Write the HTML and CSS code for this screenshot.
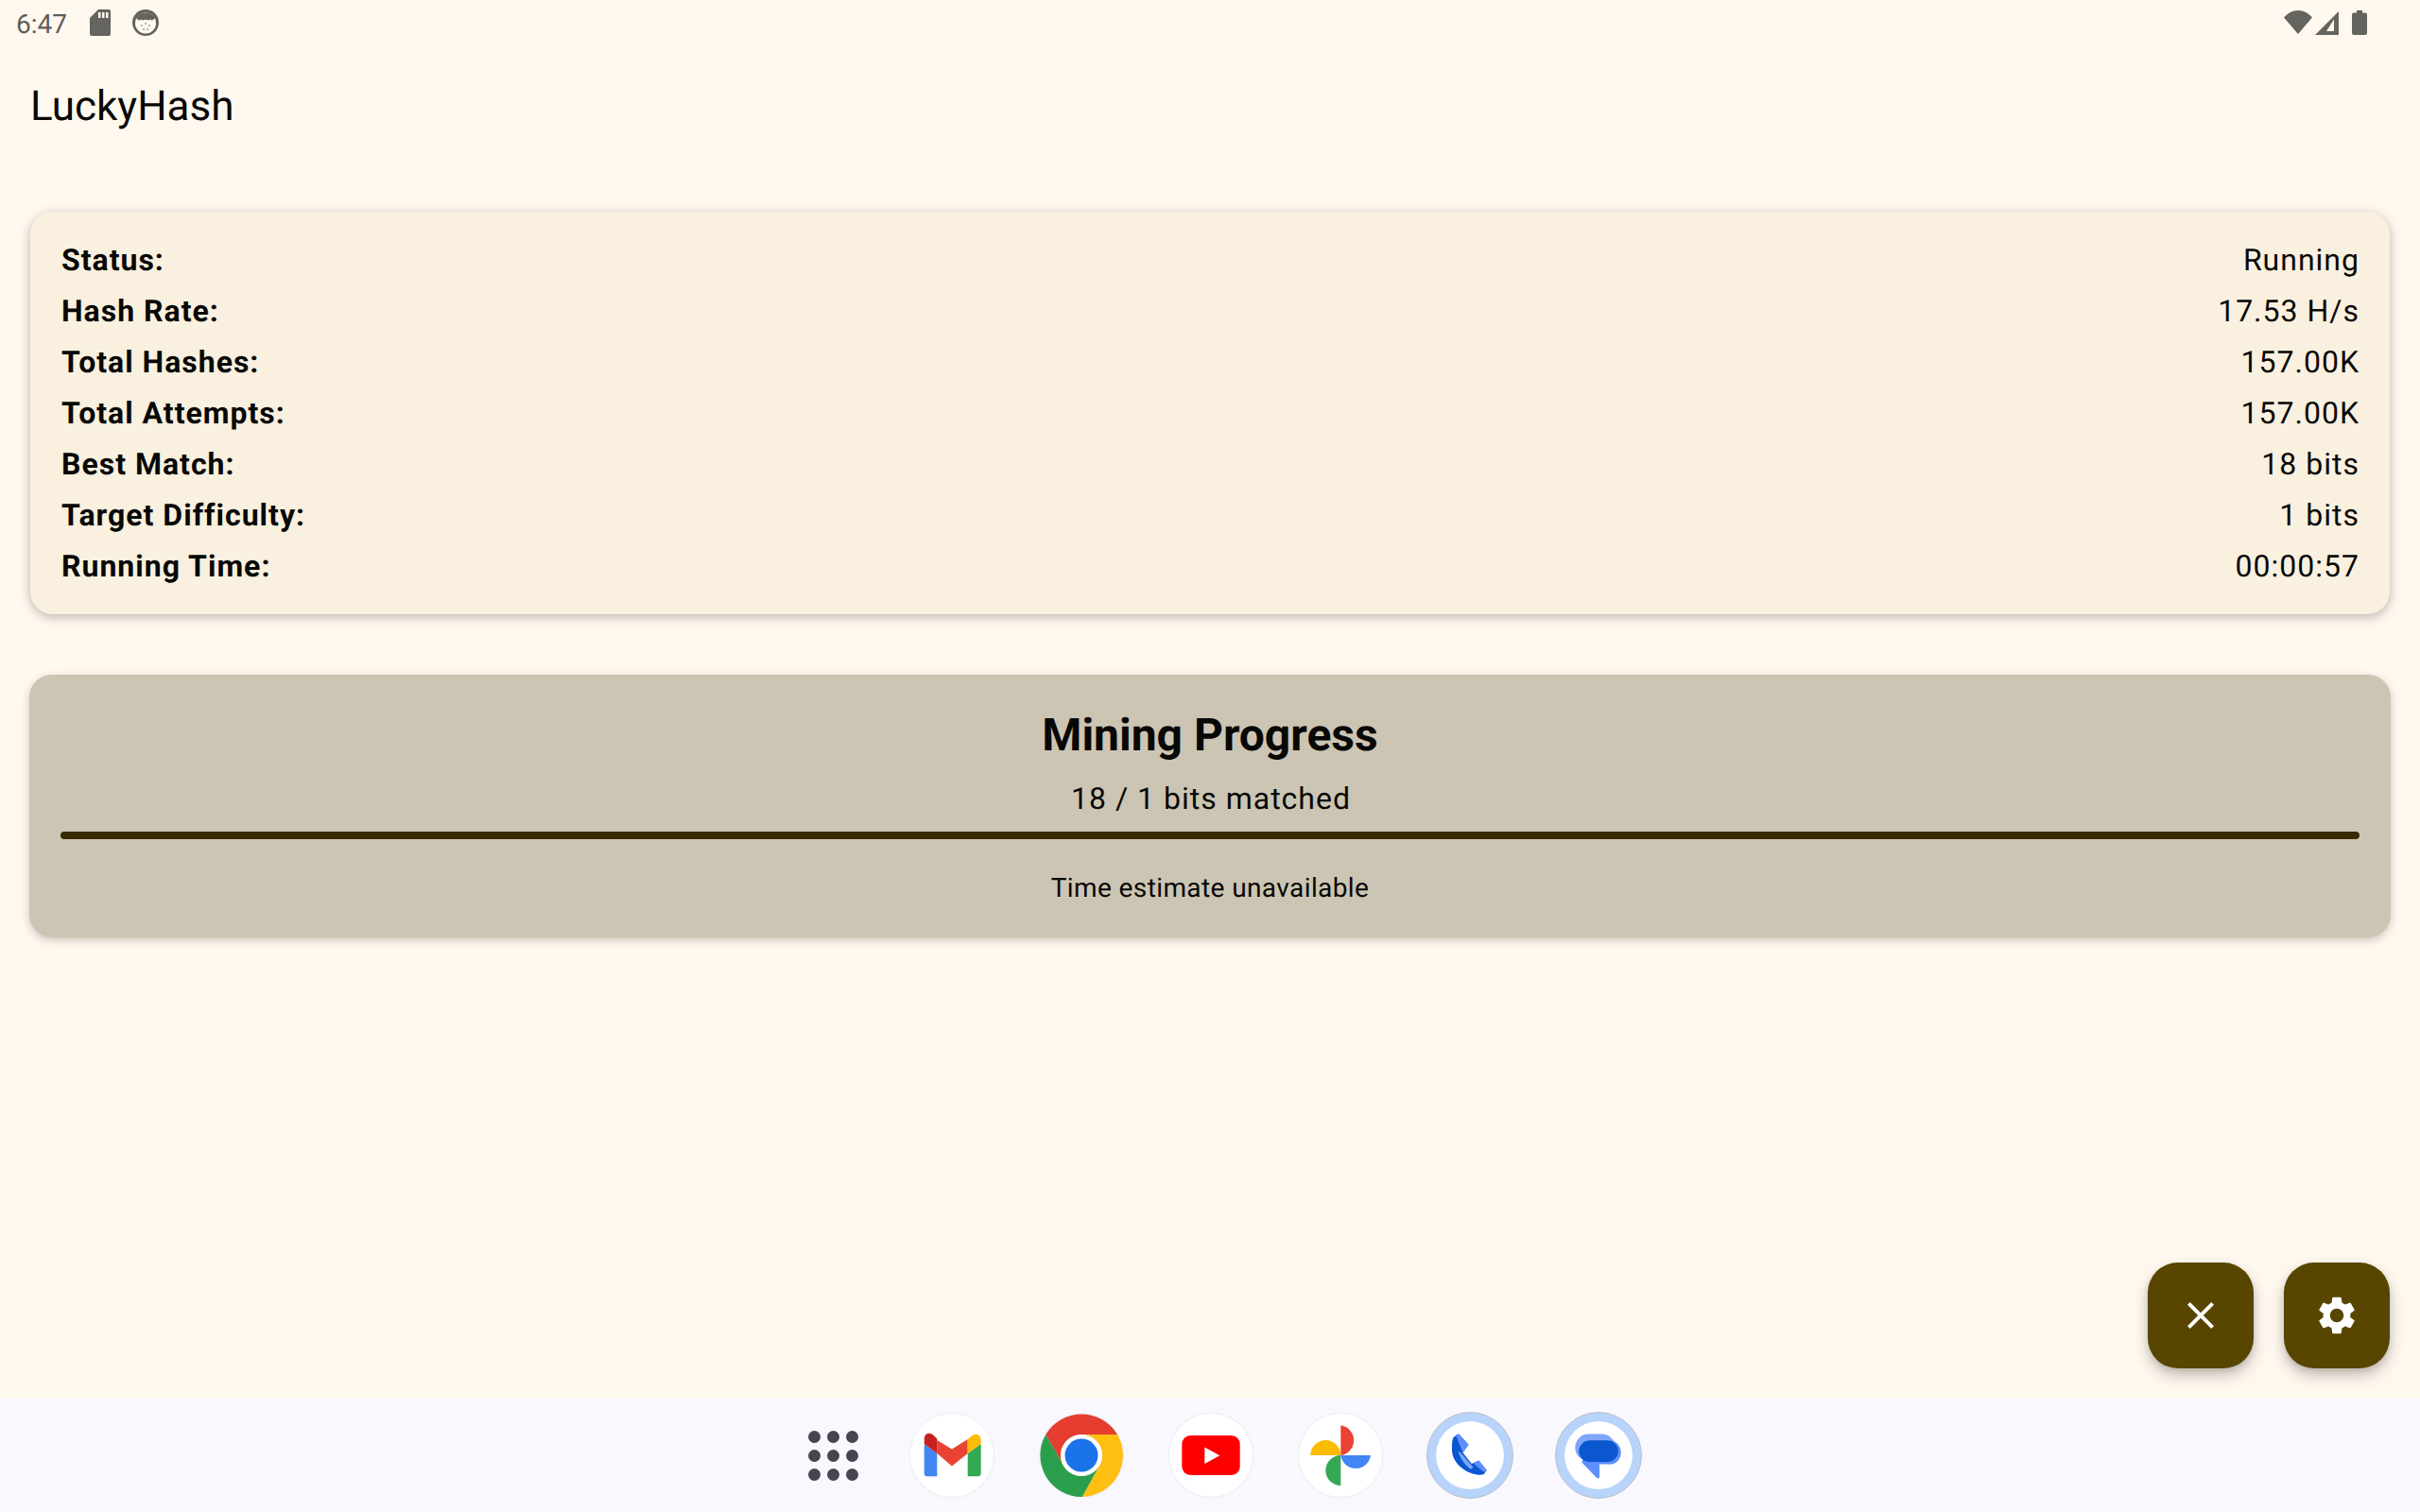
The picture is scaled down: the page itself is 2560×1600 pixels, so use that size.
FILE: index.html
```html
<!DOCTYPE html>
<html lang="en">
<head>
<meta charset="utf-8">
<title>LuckyHash</title>
<link rel="stylesheet" href="styles.css">
</head>
<body>
<div class="screen">
  <header class="statusbar">
    <div class="status-left">
      <span class="clock">6:47</span>
      <svg class="ic-sd" viewBox="0 0 22 28"><path class="st" d="M9 0h11a2 2 0 0 1 2 2v24a2 2 0 0 1-2 2H2a2 2 0 0 1-2-2V9z"/><path class="hole" d="M9 3h2.500v6H9zM13 3h2.500v6H13zM17 3h2.500v6H17z"/></svg>
      <svg class="ic-face" viewBox="0 0 28 28"><circle class="st" cx="14" cy="14" r="14"/><circle class="hole" cx="14" cy="14.500" r="11"/><path class="st" d="M4 9C7 2 21 2 24 9c-1 2-2.500 1-3 3-1.500-2-3-1-4-.5-2-1-4-1-6 0-1-.5-2.500-1.500-4 .5C6.500 10 5 11 4 9z"/><circle class="st" cx="10" cy="17" r=".8"/><circle class="st" cx="14" cy="15" r=".8"/><circle class="st" cx="18" cy="17" r=".8"/><circle class="st" cx="12" cy="21" r=".8"/><circle class="st" cx="16" cy="21" r=".8"/></svg>
    </div>
    <div class="status-right">
      <svg class="ic-wifi" viewBox="0 0 30 25"><path class="st" d="M15 25 0 7.500C4 3 9 0 15 0s11 3 15 7.500z"/></svg>
      <svg class="ic-signal" viewBox="0 0 25 25"><path class="st" d="M25 0v25H0z"/><path class="hole" d="M20 8.500V21h-8z"/></svg>
      <svg class="ic-battery" viewBox="0 0 16 26"><path class="st" d="M5 0h6v2.500h3a2 2 0 0 1 2 2V24a2 2 0 0 1-2 2H2a2 2 0 0 1-2-2V4.500a2 2 0 0 1 2-2h3z"/></svg>
    </div>
  </header>

  <main class="main">
    <h1 class="app-title">LuckyHash</h1>

    <section class="stats-card">
      <div class="stat-row"><span class="stat-label">Status:</span><span class="stat-value">Running</span></div>
      <div class="stat-row"><span class="stat-label">Hash Rate:</span><span class="stat-value">17.53 H/s</span></div>
      <div class="stat-row"><span class="stat-label">Total Hashes:</span><span class="stat-value">157.00K</span></div>
      <div class="stat-row"><span class="stat-label">Total Attempts:</span><span class="stat-value">157.00K</span></div>
      <div class="stat-row"><span class="stat-label">Best Match:</span><span class="stat-value">18 bits</span></div>
      <div class="stat-row"><span class="stat-label">Target Difficulty:</span><span class="stat-value">1 bits</span></div>
      <div class="stat-row"><span class="stat-label">Running Time:</span><span class="stat-value">00:00:57</span></div>
    </section>

    <section class="progress-card">
      <h2 class="progress-title">Mining Progress</h2>
      <p class="progress-sub">18 / 1 bits matched</p>
      <div class="progress-bar"></div>
      <p class="progress-note">Time estimate unavailable</p>
    </section>

    <div class="fabs">
      <button class="fab" aria-label="Stop">
        <svg class="fab-icon" viewBox="0 0 24 24"><path d="M19 6.410 17.590 5 12 10.590 6.410 5 5 6.410 10.590 12 5 17.590 6.410 19 12 13.410 17.590 19 19 17.590 13.410 12z"/></svg>
      </button>
      <button class="fab" aria-label="Settings">
        <svg class="fab-icon" viewBox="0 0 24 24"><path d="M19.14 12.94c.04-.3.06-.61.06-.94 0-.32-.02-.64-.07-.94l2.03-1.58c.18-.14.23-.41.12-.61l-1.92-3.32c-.12-.22-.37-.29-.59-.22l-2.39.96c-.5-.38-1.03-.7-1.62-.94l-.36-2.54c-.04-.24-.24-.41-.48-.41h-3.84c-.24 0-.43.17-.47.41l-.36 2.54c-.59.24-1.13.57-1.62.94l-2.39-.96c-.22-.08-.47 0-.59.22L2.74 8.87c-.12.21-.08.47.12.61l2.03 1.58c-.05.3-.09.63-.09.94s.02.64.07.94l-2.03 1.58c-.18.14-.23.41-.12.61l1.92 3.32c.12.22.37.29.59.22l2.39-.96c.5.38 1.03.7 1.62.94l.36 2.54c.05.24.24.41.48.41h3.84c.24 0 .44-.17.47-.41l.36-2.54c.59-.24 1.13-.56 1.62-.94l2.39.96c.22.08.47 0 .59-.22l1.92-3.32c.12-.22.07-.47-.12-.61l-2.01-1.58zM12 15.6c-1.98 0-3.6-1.62-3.6-3.6s1.62-3.6 3.6-3.6 3.6 1.62 3.6 3.6-1.62 3.6-3.6 3.6z"/></svg>
      </button>
    </div>
  </main>

  <footer class="dock">
    <div class="all-apps"><i></i><i></i><i></i><i></i><i></i><i></i><i></i><i></i><i></i></div>

    <div class="dock-item">
      <svg class="app-icon" viewBox="0 0 88 88">
        <circle cx="44" cy="44" r="44" fill="#fff"/>
        <path fill="#4285f4" d="M14.700 32v31a3.300 3.300 0 0 0 3.300 3.300h10.300V42z"/>
        <path fill="#34a853" d="M60.700 42v24.300H71.400a3.300 3.300 0 0 0 3.300-3.300V32z"/>
        <path fill="#ea4335" d="M28.300 28 44 37.500 60.700 27v15L44 55.500 28.300 42z"/>
        <path fill="#c5221f" d="M14.700 27.500c0-8 7-8 10.500-4l3.100 3V42L14.700 32z"/>
        <path fill="#fbbc04" d="M60.700 27l5-4c4-3 9-.5 9 4.500v4.500L60.700 42z"/>
      </svg>
    </div>

    <div class="dock-item">
      <svg class="app-icon" viewBox="0 0 88 88">
        <path fill="#e53d2f" d="M6.300 22A44 44 0 0 1 82 22H44A22 22 0 0 0 25 55z"/>
        <path fill="#ffc011" d="M82 22A44 44 0 0 1 44.700 88L63 55A22 22 0 0 0 44 22z"/>
        <path fill="#2b9e4c" d="M6.300 22A44 44 0 0 0 44.700 88L63 55A22 22 0 0 1 25 55z"/>
        <circle cx="44" cy="44" r="22" fill="#fff"/>
        <circle cx="44" cy="44" r="17.500" fill="#1a73e8"/>
      </svg>
    </div>

    <div class="dock-item">
      <svg class="app-icon" viewBox="0 0 88 88">
        <circle cx="44" cy="44" r="44" fill="#fff"/>
        <rect x="13.300" y="23" width="61.400" height="42" rx="9" fill="#f00"/>
        <path fill="#fff" d="M37.300 35.500 53.300 44.300 37.300 53z"/>
      </svg>
    </div>

    <div class="dock-item">
      <svg class="app-icon" viewBox="0 0 88 88">
        <circle cx="44" cy="44" r="44" fill="#fff"/>
        <path fill="#ea4335" d="M44.300 12.300A16 16 0 0 1 44.300 44z"/>
        <path fill="#fbbc04" d="M12.300 44A16 16 0 0 1 44.300 44z"/>
        <path fill="#34a853" d="M44.300 76A16 16 0 0 1 44.300 44z"/>
        <path fill="#4285f4" d="M76 44A16 16 0 0 1 44.300 44z"/>
      </svg>
    </div>

    <div class="dock-item">
      <svg class="app-icon ringed" viewBox="0 0 91 91">
        <circle cx="45.500" cy="45.500" r="45" fill="#b9d4fb" stroke="#b7b7b7" stroke-width=".8"/>
        <circle cx="45.500" cy="45.500" r="35.500" fill="#fff"/>
        <path fill="#0b57d0" d="M34 23.300 44 34.300 38 42.700 47.300 54.300 54.700 51 63 61 60 65.300C48 69 26 56 26.700 39.300 26.500 33 27 28 29 26z"/>
        <path fill="#5e8ffd" d="M34 23.300 44 34.300 38 42.700 30.500 24zM54.700 51 63 61 60 63 49 54z"/>
        <path fill="#7ea6fb" d="M33 41 36 43 49 58 46 60C40 55 36 50 33 41z"/>
      </svg>
    </div>

    <div class="dock-item">
      <svg class="app-icon ringed" viewBox="0 0 91 91">
        <circle cx="45.500" cy="45.500" r="45" fill="#b9d4fb" stroke="#b7b7b7" stroke-width=".8"/>
        <circle cx="45.500" cy="45.500" r="35.500" fill="#fff"/>
        <rect x="21" y="23.300" width="42" height="28" rx="14" fill="#7ea6fb"/>
        <path fill="#5e8ffd" d="M36 30H57C64 30 69 36 69 42.500 69 49.500 64 55 57 55H46.500V67.500C46.500 70 44.500 70 43 68.500L28 53z"/>
        <rect x="25" y="30" width="41" height="22.500" rx="11.250" fill="#0b57d0"/>
      </svg>
    </div>
  </footer>
</div>
</body>
</html>
```

FILE: styles.css
```css
* { box-sizing: border-box; }

html, body {
  margin: 0;
  padding: 0;
}

body {
  font-family: Roboto, "Liberation Sans", sans-serif;
  color: #080806;
  background: #fff8ef;
  text-rendering: geometricPrecision;
}

.screen {
  width: 2560px;
  height: 1600px;
  display: flex;
  flex-direction: column;
  overflow: hidden;
}

/* status bar */
.statusbar {
  height: 48px;
  flex: none;
  display: flex;
  justify-content: space-between;
  align-items: flex-start;
  padding: 0 56px 0 17px;
}

.status-left, .status-right { display: flex; align-items: flex-start; }

.clock {
  font-size: 28px;
  line-height: 33px;
  margin-top: 9px;
  color: #5f5e59;
  width: 78px;
}

.st { fill: #65645f; }
.hole { fill: #fff8ef; }

.ic-sd { width: 22px; height: 28px; margin-top: 10px; margin-right: 23px; }
.ic-face { width: 28px; height: 28px; margin-top: 10px; }
.ic-wifi { width: 30px; height: 25px; margin-top: 11px; margin-right: 3px; }
.ic-signal { width: 25px; height: 25px; margin-top: 12px; margin-right: 14px; }
.ic-battery { width: 16px; height: 26px; margin-top: 11px; }

/* main */
.main {
  flex: 1;
  position: relative;
  padding: 36px 32px 0;
}

.app-title {
  margin: 0 0 84px;
  font-size: 44px;
  line-height: 56px;
  font-weight: 400;
}

.stats-card {
  padding: 24px 32px;
  border-radius: 24px;
  background: #f9f0df;
  box-shadow: 0 3px 12px rgba(0, 0, 0, .27);
}

.stat-row {
  display: flex;
  justify-content: space-between;
  height: 54px;
  font-size: 32px;
  line-height: 54px;
  letter-spacing: 1px;
}

.stat-label { font-weight: 700; margin-left: 1px; }

.progress-card {
  margin: 64px -1px 0;
  padding: 32px 33px;
  height: 278px;
  border-radius: 24px;
  background: #ccc5b3;
  text-align: center;
  box-shadow: 0 3px 10px rgba(0, 0, 0, .2);
}

.progress-title {
  margin: 0;
  font-size: 48px;
  line-height: 64px;
  font-weight: 700;
}

.progress-sub {
  margin: 11px 0 0;
  padding-left: 2px;
  font-size: 32px;
  line-height: 48px;
  letter-spacing: 1px;
}

.progress-bar {
  height: 8px;
  margin-top: 11px;
  border-radius: 4px;
  background: #362a00;
}

.progress-note {
  margin: 32px 0 0;
  font-size: 28px;
  line-height: 40px;
  letter-spacing: .4px;
}

/* floating buttons */
.fabs {
  position: absolute;
  right: 32px;
  bottom: 32px;
  display: flex;
  gap: 32px;
}

.fab {
  width: 112px;
  height: 112px;
  padding: 0;
  border: 0;
  border-radius: 32px;
  background: #574500;
  display: flex;
  align-items: center;
  justify-content: center;
  box-shadow: 0 8px 16px rgba(0, 0, 0, .22), 0 3px 6px rgba(0, 0, 0, .1);
}

.fab-icon { width: 48px; height: 48px; fill: #fff; }

/* dock */
.dock {
  height: 120px;
  flex: none;
  display: flex;
  align-items: center;
  gap: 48.900px;
  padding-left: 855px;
  background: #f9f8ff;
}

.all-apps {
  width: 53px;
  height: 53px;
  margin-right: 6.100px;
  display: grid;
  grid-template-columns: repeat(3, 13px);
  grid-auto-rows: 13px;
  justify-content: space-between;
  align-content: space-between;
}

.all-apps i {
  border-radius: 50%;
  background: #45464f;
}

.dock-item {
  width: 88px;
  height: 88px;
  flex: none;
  display: flex;
  align-items: center;
  justify-content: center;
}

.app-icon { width: 88px; height: 88px; flex: none; filter: drop-shadow(0 0 1px rgba(0, 0, 0, .12)); }
.app-icon.ringed { width: 92px; height: 92px; filter: none; }
```
